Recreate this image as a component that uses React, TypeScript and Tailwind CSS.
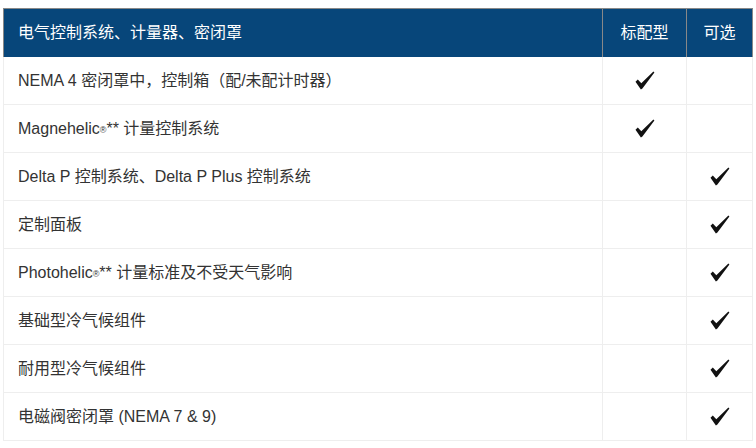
const rows: { label: string; std: boolean; opt: boolean }[] = [
  { label: 'NEMA 4 密闭罩中，控制箱（配/未配计时器）', std: true, opt: false },
  { label: 'Magnehelic®** 计量控制系统', std: true, opt: false },
  { label: 'Delta P 控制系统、Delta P Plus 控制系统', std: false, opt: true },
  { label: '定制面板', std: false, opt: true },
  { label: 'Photohelic®** 计量标准及不受天气影响', std: false, opt: true },
  { label: '基础型冷气候组件', std: false, opt: true },
  { label: '耐用型冷气候组件', std: false, opt: true },
  { label: '电磁阀密闭罩 (NEMA 7 & 9)', std: false, opt: true },
];

function Check() {
  return (
    <svg width="20" height="19" viewBox="0 0 20 19" className="block">
      <path
        d="M0.5 10.8 L2.8 8.6 L6.3 12.2 L18.4 0.6 L19.4 1.6 L7.4 17.6 L5.9 18.4 Z"
        fill="#111"
      />
    </svg>
  );
}

function Label({ text }: { text: string }) {
  // ® is set small and raised
  const parts = text.split('®');
  if (parts.length === 1) return <>{text}</>;
  return (
    <>
      {parts[0]}
      <sup className="text-[9px] relative -top-[1px]">®</sup>
      {parts[1]}
    </>
  );
}

export default function App() {
  return (
    <div className="bg-white min-h-[448px] w-[756px] pt-[8px] pl-[3px] font-['Liberation_Sans','Noto_Sans_CJK_SC',sans-serif]">
      <div className="w-[750px]">
        {/* Header */}
        <div className="grid grid-cols-[599px_84px_67px] h-[49px] bg-[#07467a] text-white text-[16px] border-t border-[#888]">
          <div className="flex items-center pl-[14px] border-l border-[#888]">
            电气控制系统、计量器、密闭罩
          </div>
          <div className="flex items-center justify-center border-l border-[#888]">标配型</div>
          <div className="flex items-center justify-center border-l border-r border-[#888]">可选</div>
        </div>

        {/* Body */}
        {rows.map((r) => (
          <div
            key={r.label}
            className="grid grid-cols-[599px_84px_67px] h-[48px] text-[16px] text-[#333]"
          >
            <div className="flex items-center pl-[14px] border-l border-b border-[#eee]">
              <span>
                <Label text={r.label} />
              </span>
            </div>
            <div className="flex items-center justify-center border-l border-b border-[#eee]">
              {r.std && <Check />}
            </div>
            <div className="flex items-center justify-center border-l border-r border-b border-[#eee]">
              {r.opt && <Check />}
            </div>
          </div>
        ))}
      </div>
    </div>
  );
}
